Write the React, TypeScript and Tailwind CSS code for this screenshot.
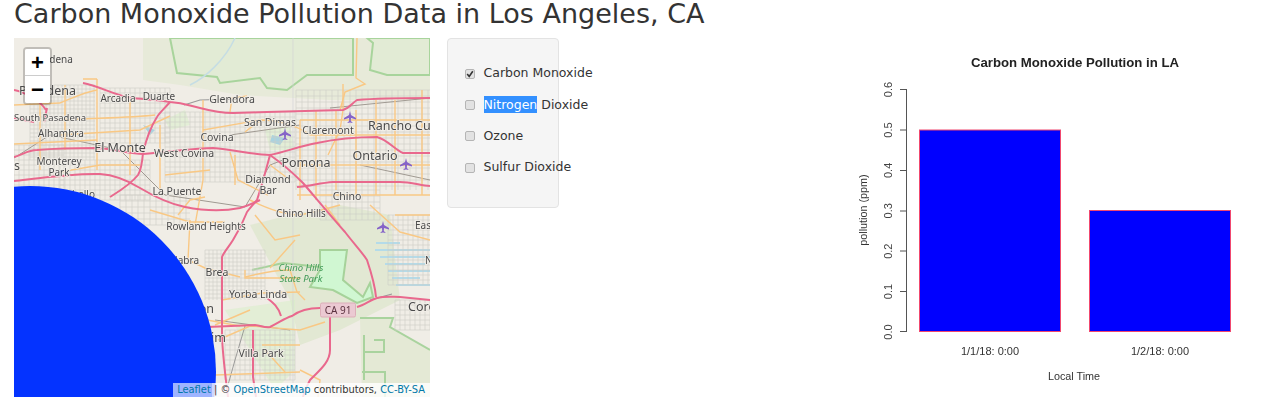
const MOTORWAYS = [
  "M14 90 C24 92 40 100 46 110",
  "M83 83 C100 86 115 96 133 98 C150 100 160 100 170 102 C185 103 190 106 200 108 C215 112 222 113 233 113 C270 112 310 111 343 110 C350 108 352 103 357 100 C380 98 410 98 430 98",
  "M14 157 C22 155 28 150 37 150 C60 148 80 148 97 148 C115 149 130 154 143 154 C170 152 195 148 213 148 C235 150 250 154 270 155 C285 152 300 146 317 143 C340 138 360 137 377 137 C388 140 395 150 403 153 L430 153",
  "M170 102 C165 108 160 112 157 117 C150 128 146 140 143 153 C142 165 141 170 138 175 C130 185 118 192 110 197",
  "M14 181 C40 178 75 173 100 174 C115 175 127 180 140 188 C155 197 170 204 185 207 C205 211 225 211 240 208 C248 206 254 203 260 200",
  "M270 155 C266 170 262 185 257 200 C252 206 250 208 247 212 C242 225 238 232 233 240 C228 248 224 252 222 257 L222 333 C222 350 224 365 228 397",
  "M270 155 C280 162 292 172 303 183 C315 197 330 215 345 232 C355 245 362 252 367 260 C372 275 375 285 376 297",
  "M297 187 C310 186 320 183 333 182 L400 182 C410 182 420 185 430 186",
  "M207 327 L255 325 C262 326 265 328 270 327 C280 322 285 318 292 316 C300 310 310 308 320 308",
  "M357 307 C365 305 370 300 377 298 C385 296 392 297 400 297 L430 300",
  "M330 317 L330 350 C330 362 320 370 310 380 C306 388 304 392 303 397",
  "M253 330 L253 377 L256 397",
  "M267 298 C272 302 278 306 281 316",
  "M14 118 L34 122 M47 108 L44 122",
];

const ARTERIALS = [
  "M97 79 L97 170", "M203 100 L203 180 L195 225", "M343 84 L343 110 L340 130 L328 155",
  "M357 38 L356 78 L365 84 L345 92 L340 110", "M60 120 C90 118 130 118 155 115", "M14 144 L97 140",
  "M60 103 C75 97 85 92 97 90 M97 79 L83 79", "M230 112 L232 98 L247 96", "M245 132 C250 128 258 122 262 120 C275 120 295 124 310 135",
  "M310 135 L430 135", "M300 120 L300 200", "M316 110 L316 200", "M336 110 L336 190",
  "M356 110 L356 195", "M376 100 L376 195", "M395 100 L395 195", "M422 90 L422 195",
  "M300 165 L430 165", "M300 120 L430 120", "M297 195 L430 195", "M230 152 L238 180 L268 195",
  "M178 215 L190 200 L205 197", "M190 220 L188 260 L205 268 L240 277", "M245 277 C265 272 280 270 290 270 L297 292 L305 300",
  "M245 270 L245 278 L300 278", "M222 300 L262 293 L300 292", "M215 325 L250 310", "M207 320 L240 326",
  "M218 340 L250 326 L300 330 L325 322", "M295 240 L270 268", "M300 370 L320 380 L318 397",
  "M215 375 L300 372", "M250 200 C270 210 285 215 300 215 C315 212 330 208 340 205", "M370 205 L400 232 L430 240",
  "M60 172 L100 165 L140 165", "M35 195 L80 205", "M60 135 L140 130 L170 116",
  "M14 105 L60 103", "M203 130 L260 120", "M165 175 L210 170", "M150 210 L190 222 L225 222",
  "M255 215 L275 240 L300 235", "M325 205 L340 225", "M395 215 L430 215", "M262 345 L300 345",
  "M40 95 L40 170", "M65 85 L65 150", "M130 100 L130 175", "M160 125 L160 190",
  "M235 155 L235 185", "M270 165 L290 180", "M265 350 L285 372",
];

// street clusters: blocks of thin grey lines, step is the block size
const GRIDS = [
  { x: 30, y: 85, w: 65, h: 75, step: 4 }, { x: 100, y: 88, w: 70, h: 55, step: 5 },
  { x: 165, y: 112, w: 130, h: 70, step: 5 }, { x: 60, y: 160, w: 90, h: 40, step: 5 },
  { x: 296, y: 90, w: 134, h: 100, step: 6 }, { x: 205, y: 250, w: 60, h: 50, step: 4 },
  { x: 225, y: 330, w: 70, h: 50, step: 5 }, { x: 388, y: 215, w: 42, h: 70, step: 5 },
  { x: 320, y: 190, w: 60, h: 30, step: 6 }, { x: 120, y: 195, w: 70, h: 30, step: 6 },
  { x: 14, y: 145, w: 50, h: 45, step: 5 }, { x: 395, y: 300, w: 35, h: 30, step: 5 },
];

const PLANES = [
  [350, 117],
  [285, 134],
  [406, 164],
  [383, 227],
];

const LABELS: { t: string; x: number; y: number; s?: number; a?: "start" | "end" }[] = [
  { t: "Altadena", x: 52, y: 63, s: 10 },
  { t: "Pasadena", x: 76, y: 95, s: 12.5, a: "end" },
  { t: "South Pasadena", x: 14, y: 121, s: 9.5, a: "start" },
  { t: "Arcadia", x: 118, y: 102, s: 10 },
  { t: "Duarte", x: 159, y: 100, s: 10 },
  { t: "Glendora", x: 232, y: 103, s: 10.5 },
  { t: "San Dimas", x: 270, y: 126, s: 10.5 },
  { t: "Claremont", x: 328, y: 134, s: 10.5 },
  { t: "Rancho Cucamonga", x: 368, y: 130, s: 12.5, a: "start" },
  { t: "Alhambra", x: 61, y: 137, s: 10 },
  { t: "Covina", x: 217, y: 141, s: 10.5 },
  { t: "El Monte", x: 120, y: 152, s: 12.5 },
  { t: "West Covina", x: 184, y: 157, s: 10.5 },
  { t: "Ontario", x: 375, y: 160, s: 12.5 },
  { t: "Pomona", x: 306, y: 167, s: 12.5 },
  { t: "Monterey", x: 59, y: 165, s: 10 },
  { t: "Park", x: 59, y: 176, s: 10 },
  { t: "s", x: 14, y: 170, s: 12.5, a: "start" },
  { t: "Montebello", x: 95, y: 198, s: 10, a: "end" },
  { t: "La Puente", x: 177, y: 195, s: 10.5 },
  { t: "Diamond", x: 268, y: 183, s: 10.5 },
  { t: "Bar", x: 268, y: 194, s: 10.5 },
  { t: "Chino", x: 347, y: 200, s: 10.5 },
  { t: "Chino Hills", x: 301, y: 217, s: 10 },
  { t: "Rowland Heights", x: 206, y: 230, s: 10 },
  { t: "Eastvale", x: 415, y: 229, s: 10, a: "start" },
  { t: "La Habra", x: 199, y: 264, s: 10, a: "end" },
  { t: "Brea", x: 217, y: 276, s: 10.5 },
  { t: "Yorba Linda", x: 258, y: 298, s: 10.5 },
  { t: "Fullerton", x: 214, y: 313, s: 12.5, a: "end" },
  { t: "Anaheim", x: 226, y: 342, s: 12.5, a: "end" },
  { t: "Villa Park", x: 261, y: 357, s: 10.5 },
  { t: "Corona", x: 408, y: 311, s: 12.5, a: "start" },
  { t: "Norco", x: 425, y: 264, s: 10, a: "start" },
];

function streetLines(g: { x: number; y: number; w: number; h: number; step: number }) {
  const lines: string[] = [];
  for (let x = g.x; x <= g.x + g.w; x += g.step) lines.push(`M${x} ${g.y} V${g.y + g.h}`);
  for (let y = g.y; y <= g.y + g.h; y += g.step) lines.push(`M${g.x} ${y} H${g.x + g.w}`);
  return lines.join(" ");
}

function MapTiles() {
  return (
    <svg viewBox="14 38 416 359" className="block w-full h-full blur-[0.4px]">
      <rect x="14" y="38" width="416" height="359" fill="#f0ede6" />
      {/* forest + parks */}
      <path d="M143 38 H430 V100 L330 100 L240 95 L180 85 L143 80 Z" fill="#e7ead9" />
      <path d="M170 38 L177 73 L217 77 L220 83 L260 78 L267 88 L287 90 L307 75 L353 75 V38 Z" fill="#e2ebd5" stroke="#a8d49c" strokeWidth="2" />
      <path d="M367 38 L373 43 L370 70 L387 75 H430 V38 Z" fill="#e2ebd5" stroke="#a8d49c" strokeWidth="2" />
      <path d="M250 225 L290 215 L340 205 L390 215 L400 300 L340 330 L300 345 L290 300 Z" fill="#dfe6ce" opacity="0.8" />
      <path d="M320 250 H347 L343 280 L363 297 L370 283 L373 297 L357 303 L333 290 L310 287 L320 270 Z" fill="#d0f7d2" stroke="#a6d29a" strokeWidth="2" />
      <path d="M252 270 L283 263 L320 267" fill="none" stroke="#a6d29a" strokeWidth="2" />
      <path d="M360 318 H393 L390 327 L430 350 V397 H362 Z" fill="#e4e9d5" />
      <path d="M360 318 H393 L390 327 L430 350 M364 335 L364 380 M364 352 H384 V340 H374 M362 372 H385 V397" fill="none" stroke="#a9d39e" strokeWidth="2" />
      <path d="M165 120 L185 110 L190 125 L170 130 Z M265 130 L290 125 L295 150 L270 150 Z M225 310 L295 300 L295 370 L275 390 Z" fill="#d6efc6" opacity="0.5" />
      <path d="M190 85 C205 78 225 60 235 38" fill="none" stroke="#c5dde4" strokeWidth="1.5" />
      <path d="M143 125 L155 130 L150 135 Z M272 135 L285 138 L280 145 L270 142 Z" fill="#aad3df" />
      {/* water channels */}
      <path d="M375 250 H430 M380 257 H430 M385 264 H425 M388 271 H430 M392 278 H420 M396 285 H430 M376 243 H400" stroke="#b4dbe9" strokeWidth="2" fill="none" />
      {/* streets */}
      {GRIDS.map((g, i) => (
        <path key={i} d={streetLines(g)} stroke="#cfccc8" strokeWidth="0.6" fill="none" />
      ))}
      <path d="M14 158 L50 135 L120 150 L165 195 L245 207 L270 165 L283 160 M230 135 L300 125 M360 165 L430 180 M215 320 L290 330 M330 108 L430 98" stroke="#a09a92" strokeWidth="1" fill="none" />
      <path d="M184 105 L200 100 L236 99 M370 300 L392 294" stroke="#999" strokeWidth="1.2" fill="none" />
      <path d="M245 326 L235 360 L228 385" stroke="#888" strokeWidth="0.8" fill="none" />
      <path d="M293 38 V397" stroke="#d3d3d5" strokeWidth="0.7" />
      {ARTERIALS.map((d, i) => (
        <path key={i} d={d} stroke="#f9c884" strokeWidth="1.4" fill="none" />
      ))}
      {MOTORWAYS.map((d, i) => (
        <path key={i} d={d} stroke="#e9688d" strokeWidth="2" strokeLinejoin="round" fill="none" />
      ))}
      {PLANES.map(([x, y]) => (
        <path
          key={`${x}-${y}`}
          transform={`translate(${x} ${y})`}
          d="M0 -6 L1 -2 L6 1 V2.4 L1 1 L0.8 4 L2.5 5.4 V6 L0 5.4 L-2.5 6 V5.4 L-0.8 4 L-1 1 L-6 2.4 V1 L-1 -2 Z"
          fill="#8563c8"
        />
      ))}
      {LABELS.map((l) => (
        <text
          key={l.t}
          x={l.x}
          y={l.y}
          fontSize={l.s ?? 10}
          textAnchor={l.a ?? "middle"}
          fill="#4a4a4a"
          stroke="#f2efe9"
          strokeWidth="1.5"
          paintOrder="stroke"
          fontFamily="'Noto Sans', sans-serif"
        >
          {l.t}
        </text>
      ))}
      <g fontFamily="'Noto Sans', sans-serif" fontSize="9.5" fontStyle="italic" fill="#3f9a57" textAnchor="middle">
        <text x="301" y="271">Chino Hills</text>
        <text x="301" y="282">State Park</text>
      </g>
      <rect x="320.5" y="303" width="35" height="14" rx="1.5" fill="#ebc9d2" stroke="#dcaeb9" />
      <text x="338" y="314" fontSize="10" textAnchor="middle" fill="#5c3240" fontFamily="'Noto Sans', sans-serif">CA 91</text>
      <circle cx="30" cy="372" r="186" fill="#0433ff" />
    </svg>
  );
}

function PlotSvg() {
  const ticks = ["0.0", "0.1", "0.2", "0.3", "0.4", "0.5", "0.6"];
  return (
    <svg viewBox="0 0 400 360" className="block w-[400px] h-[360px] blur-[0.35px]" fontFamily="'Liberation Sans', sans-serif">
      <g transform="translate(0 2)">
        <text x="225" y="27" fontSize="13.2" fontWeight="700" textAnchor="middle" fill="#222">Carbon Monoxide Pollution in LA</text>
        <path d="M56.5 49 V292 M50 49.5 H56.5 M50 90 H56.5 M50 130.5 H56.5 M50 171 H56.5 M50 211 H56.5 M50 251.5 H56.5 M50 291.5 H56.5" stroke="#555" fill="none" />
        {ticks.map((t, i) => (
          <text key={t} transform={`translate(42 ${292 - i * 40.4}) rotate(-90)`} fontSize="11" textAnchor="middle" fill="#444">{t}</text>
        ))}
        <text transform="translate(17 170) rotate(-90)" fontSize="10.8" textAnchor="middle" fill="#333">pollution (ppm)</text>
        <rect x="69.5" y="90" width="141" height="201.5" fill="#0000ff" stroke="#f0476f" />
        <rect x="239.5" y="170.5" width="141" height="121" fill="#0000ff" stroke="#f0476f" />
        <text x="140" y="315" fontSize="11" textAnchor="middle" fill="#333">1/1/18: 0:00</text>
        <text x="310" y="315" fontSize="11" textAnchor="middle" fill="#333">1/2/18: 0:00</text>
        <text x="224" y="340" fontSize="10.8" textAnchor="middle" fill="#333">Local Time</text>
      </g>
    </svg>
  );
}

function Check({ label, checked, selected }: { label: string; checked?: boolean; selected?: string }) {
  const rest = selected ? label.slice(selected.length) : label;
  return (
    <label className="flex items-center h-[31.4px] whitespace-nowrap">
      <span className="shrink-0 flex items-center justify-center w-[10px] h-[10px] rounded-[2px] border border-[#b5b5b5] bg-[#e2e2e2] mr-[8.5px]">
        {checked && (
          <svg viewBox="0 0 10 10" className="w-[8px] h-[8px]">
            <path d="M1.5 5 L4 8 L8.5 1.5" stroke="#333" strokeWidth="2" fill="none" />
          </svg>
        )}
      </span>
      <span>
        {selected && <span className="bg-[#3390ff] text-white py-[1px]">{selected}</span>}
        {rest}
      </span>
    </label>
  );
}

export default function App() {
  return (
    <div className="h-[419px] bg-white overflow-hidden text-[#333] font-['DejaVu_Sans',sans-serif]">
      <h1 className="px-[14px] text-[27px] leading-[28px] pb-[10px] font-normal">
        Carbon Monoxide Pollution Data in Los Angeles, CA
      </h1>
      <div className="flex items-start px-[14px]">
        <div className="relative w-[416px] h-[359px] overflow-hidden">
          <MapTiles />
          {/* zoom control */}
          <div className="absolute left-[9px] top-[9px] w-[29px] rounded-[4px] border-2 border-black/20 bg-clip-padding">
            <div className="h-[27px] bg-white rounded-t-[2px] border-b border-[#ccc] flex items-center justify-center text-[22px] font-bold text-black font-['Liberation_Sans',sans-serif]">
              +
            </div>
            <div className="h-[27px] bg-white rounded-b-[2px] flex items-center justify-center text-[22px] font-bold text-black font-['Liberation_Sans',sans-serif]">
              −
            </div>
          </div>
          <div className="absolute right-0 bottom-0 h-[14px] pl-[4px] pr-[5px] bg-white/80 text-[9.9px] leading-[14px] whitespace-nowrap text-[#333]">
            <span className="absolute left-0 top-0 w-[39px] h-[14px] bg-[#3366ff]/30" />
            <span className="relative text-[#0078a8]">Leaflet</span> | © <span className="text-[#0078a8]">OpenStreetMap</span> contributors,{" "}
            <span className="text-[#0078a8]">CC-BY-SA</span>
          </div>
        </div>
        <div className="ml-[17px] w-[112px] h-[170px] bg-[#f5f5f5] border border-[#e3e3e3] rounded-[4px] pl-[17px] pt-[19px] text-[12.5px]">
          <Check label="Carbon Monoxide" checked />
          <Check label="Nitrogen Dioxide" selected="Nitrogen" />
          <Check label="Ozone" />
          <Check label="Sulfur Dioxide" />
        </div>
        <div className="ml-auto mr-[2px]">
          <PlotSvg />
        </div>
      </div>
    </div>
  );
}
